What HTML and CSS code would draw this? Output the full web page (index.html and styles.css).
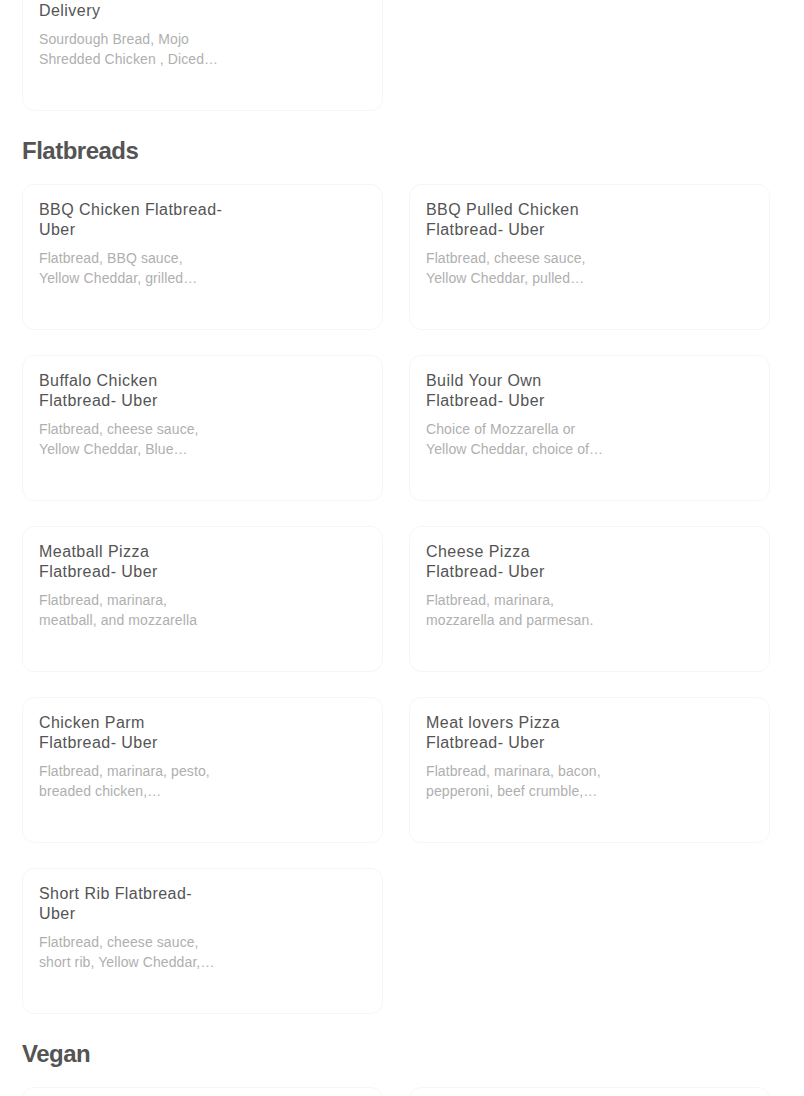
FILE: index.html
```html
<!DOCTYPE html>
<html>
<head>
<meta charset="utf-8">
<link rel="stylesheet" href="styles.css">
</head>
<body>
<main class="menu">
  <section class="section section-first">
    <div class="grid">
      <div class="card">
        <div class="info">
          <div class="title">Cuban Sandwich- Uber Delivery</div>
          <div class="desc">Sourdough Bread, Mojo Shredded Chicken , Diced Ham, Swiss, Pickles</div>
        </div>
      </div>
    </div>
  </section>

  <section class="section">
    <h2 class="heading">Flatbreads</h2>
    <div class="grid">
      <div class="card"><div class="info">
        <div class="title">BBQ Chicken Flatbread- Uber</div>
        <div class="desc">Flatbread, BBQ sauce, Yellow Cheddar, grilled chicken, red onion</div>
      </div></div>
      <div class="card"><div class="info">
        <div class="title">BBQ Pulled Chicken Flatbread- Uber</div>
        <div class="desc">Flatbread, cheese sauce, Yellow Cheddar, pulled chicken, BBQ sauce</div>
      </div></div>
      <div class="card"><div class="info">
        <div class="title">Buffalo Chicken Flatbread- Uber</div>
        <div class="desc">Flatbread, cheese sauce, Yellow Cheddar, Blue cheese, buffalo chicken</div>
      </div></div>
      <div class="card"><div class="info">
        <div class="title">Build Your Own Flatbread- Uber</div>
        <div class="desc">Choice of Mozzarella or Yellow Cheddar, choice of sauce and toppings</div>
      </div></div>
      <div class="card"><div class="info">
        <div class="title">Meatball Pizza Flatbread- Uber</div>
        <div class="desc">Flatbread, marinara, meatball, and mozzarella</div>
      </div></div>
      <div class="card"><div class="info">
        <div class="title">Cheese Pizza Flatbread- Uber</div>
        <div class="desc">Flatbread, marinara, mozzarella and parmesan.</div>
      </div></div>
      <div class="card"><div class="info">
        <div class="title">Chicken Parm Flatbread- Uber</div>
        <div class="desc">Flatbread, marinara, pesto, breaded chicken, mozzarella&nbsp;cheese, parmesan</div>
      </div></div>
      <div class="card"><div class="info">
        <div class="title">Meat lovers Pizza Flatbread- Uber</div>
        <div class="desc">Flatbread, marinara, bacon, pepperoni, beef crumble, sausage, mozzarella</div>
      </div></div>
      <div class="card"><div class="info">
        <div class="title">Short Rib Flatbread- Uber</div>
        <div class="desc">Flatbread, cheese sauce, short rib, Yellow Cheddar, caramelized onion</div>
      </div></div>
    </div>
  </section>

  <section class="section">
    <h2 class="heading">Vegan</h2>
    <div class="grid">
      <div class="card"><div class="info">
        <div class="title">Vegan Flatbread- Uber</div>
        <div class="desc">Flatbread, marinara, vegan cheese, vegetables</div>
      </div></div>
      <div class="card"><div class="info">
        <div class="title">Vegan Bowl- Uber</div>
        <div class="desc">Rice, black beans, roasted vegetables, avocado</div>
      </div></div>
    </div>
  </section>
</main>
</body>
</html>
```

FILE: styles.css
```css
* {
  box-sizing: border-box;
}

html, body {
  margin: 0;
  padding: 0;
  background: #ffffff;
}

body {
  font-family: "Liberation Sans", Arial, sans-serif;
  color: #545454;
}

.menu {
  width: 748px;
  margin: 0 0 0 22px;
}

.section-first {
  margin-top: -35px;
}

.section {
  display: flex;
  flex-direction: column;
}

.heading {
  margin: 28px 0 21px;
  font-size: 24px;
  line-height: 24px;
  font-weight: 700;
  letter-spacing: -0.5px;
  color: #545454;
}

.grid {
  display: grid;
  grid-template-columns: 1fr 1fr;
  column-gap: 26px;
  row-gap: 25px;
}

.card {
  height: 146px;
  border: 1px solid #f6f6f6;
  border-radius: 12px;
  padding: 15px 16px;
  display: flex;
}

.info {
  width: 185px;
}

.title {
  font-size: 16px;
  line-height: 20px;
  font-weight: 500;
  letter-spacing: 0.45px;
  color: #545454;
}

.desc {
  margin-top: 8px;
  font-size: 14px;
  line-height: 20px;
  letter-spacing: 0.1px;
  color: #afafaf;
  display: -webkit-box;
  -webkit-line-clamp: 2;
  -webkit-box-orient: vertical;
  overflow: hidden;
}
```
